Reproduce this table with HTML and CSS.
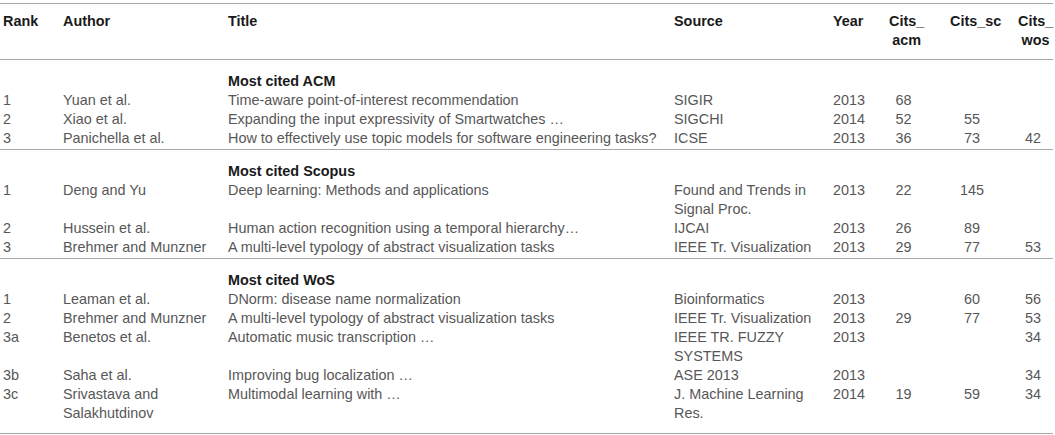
FILE: index.html
```html
<!DOCTYPE html>
<html>
<head>
<meta charset="utf-8">
<link rel="stylesheet" href="styles.css">
</head>
<body>
<table class="tbl">
  <colgroup>
    <col class="c-rank"><col class="c-author"><col class="c-title"><col class="c-source"><col class="c-year"><col class="c-acm"><col class="c-sc"><col class="c-wos">
  </colgroup>
  <thead>
    <tr>
      <th class="first">Rank</th><th>Author</th><th>Title</th><th>Source</th><th>Year</th>
      <th class="num"><span class="hd">Cits_<br>acm</span></th>
      <th class="num"><span class="hd">Cits_sc</span></th>
      <th class="num"><span class="hd">Cits_<br>wos</span></th>
    </tr>
  </thead>
  <tbody class="sec">
    <tr class="head"><td class="first"></td><td></td><td class="sect">Most cited ACM</td><td></td><td></td><td></td><td></td><td></td></tr>
    <tr><td class="first">1</td><td>Yuan et al.</td><td class="title">Time-aware point-of-interest recommendation</td><td>SIGIR</td><td>2013</td><td class="num acm">68</td><td class="num sc"></td><td class="num wos"></td></tr>
    <tr><td class="first">2</td><td>Xiao et al.</td><td class="title">Expanding the input expressivity of Smartwatches …</td><td>SIGCHI</td><td>2014</td><td class="num acm">52</td><td class="num sc">55</td><td class="num wos"></td></tr>
    <tr class="last"><td class="first">3</td><td>Panichella et al.</td><td class="title">How to effectively use topic models for software engineering tasks?</td><td>ICSE</td><td>2013</td><td class="num acm">36</td><td class="num sc">73</td><td class="num wos">42</td></tr>
  </tbody>
  <tbody class="sec">
    <tr class="head"><td class="first"></td><td></td><td class="sect">Most cited Scopus</td><td></td><td></td><td></td><td></td><td></td></tr>
    <tr><td class="first">1</td><td>Deng and Yu</td><td class="title">Deep learning: Methods and applications</td><td>Found and Trends in Signal Proc.</td><td>2013</td><td class="num acm">22</td><td class="num sc">145</td><td class="num wos"></td></tr>
    <tr><td class="first">2</td><td>Hussein et al.</td><td class="title">Human action recognition using a temporal hierarchy…</td><td>IJCAI</td><td>2013</td><td class="num acm">26</td><td class="num sc">89</td><td class="num wos"></td></tr>
    <tr class="last"><td class="first">3</td><td>Brehmer and Munzner</td><td class="title">A multi-level typology of abstract visualization tasks</td><td>IEEE Tr. Visualization</td><td>2013</td><td class="num acm">29</td><td class="num sc">77</td><td class="num wos">53</td></tr>
  </tbody>
  <tbody class="sec">
    <tr class="head"><td class="first"></td><td></td><td class="sect">Most cited WoS</td><td></td><td></td><td></td><td></td><td></td></tr>
    <tr><td class="first">1</td><td>Leaman et al.</td><td class="title">DNorm: disease name normalization</td><td>Bioinformatics</td><td>2013</td><td class="num acm"></td><td class="num sc">60</td><td class="num wos">56</td></tr>
    <tr><td class="first">2</td><td>Brehmer and Munzner</td><td class="title">A multi-level typology of abstract visualization tasks</td><td>IEEE Tr. Visualization</td><td>2013</td><td class="num acm">29</td><td class="num sc">77</td><td class="num wos">53</td></tr>
    <tr><td class="first">3a</td><td>Benetos et al.</td><td class="title">Automatic music transcription …</td><td>IEEE TR. FUZZY SYSTEMS</td><td>2013</td><td class="num acm"></td><td class="num sc"></td><td class="num wos">34</td></tr>
    <tr><td class="first">3b</td><td>Saha et al.</td><td class="title">Improving bug localization …</td><td>ASE 2013</td><td>2013</td><td class="num acm"></td><td class="num sc"></td><td class="num wos">34</td></tr>
    <tr class="last"><td class="first">3c</td><td>Srivastava and Salakhutdinov</td><td class="title">Multimodal learning with …</td><td>J. Machine Learning Res.</td><td>2014</td><td class="num acm">19</td><td class="num sc">59</td><td class="num wos">34</td></tr>
  </tbody>
</table>
</body>
</html>
```

FILE: styles.css
```css
html, body {
  margin: 0;
  padding: 0;
  background: #ffffff;
}
body {
  padding: 3px 2px 0 0;
  font-family: "Liberation Sans", Arial, sans-serif;
  font-size: 14.4px;
  line-height: 19px;
  color: #575757;
}
.tbl {
  border-collapse: collapse;
  table-layout: fixed;
  width: 1053px;
}
.c-rank { width: 63px; }
.c-author { width: 165px; }
.c-title { width: 446px; }
.c-source { width: 159px; }
.c-year { width: 56px; }
.c-acm { width: 61px; }
.c-sc { width: 68px; }
.c-wos { width: 35px; }

.tbl th, .tbl td {
  padding: 0;
  text-align: left;
  vertical-align: top;
}
.tbl th.first, .tbl td.first { padding-left: 3px; }
.tbl thead th {
  font-weight: bold;
  color: #1a1a1a;
  padding-top: 8px;
  padding-bottom: 9px;
}
.tbl thead tr {
  border-top: 1.5px solid #a8a8a8;
  border-bottom: 1.5px solid #a8a8a8;
}
.tbl th.num .hd {
  display: inline-block;
  text-align: center;
}
.tbl td.title { white-space: nowrap; }
.tbl td.num { text-align: center; }
.tbl td.acm { padding-right: 32px; }
.tbl td.sc { padding-right: 24px; }
.tbl td.wos { padding-right: 5px; }

.sec { border-bottom: 1.5px solid #a8a8a8; }
.sec .head td { padding-top: 12px; }
.sect {
  font-weight: bold;
  color: #1a1a1a;
}
.sec .last td { padding-bottom: 1px; }
.sec:last-child .last td { padding-bottom: 10px; }
```
